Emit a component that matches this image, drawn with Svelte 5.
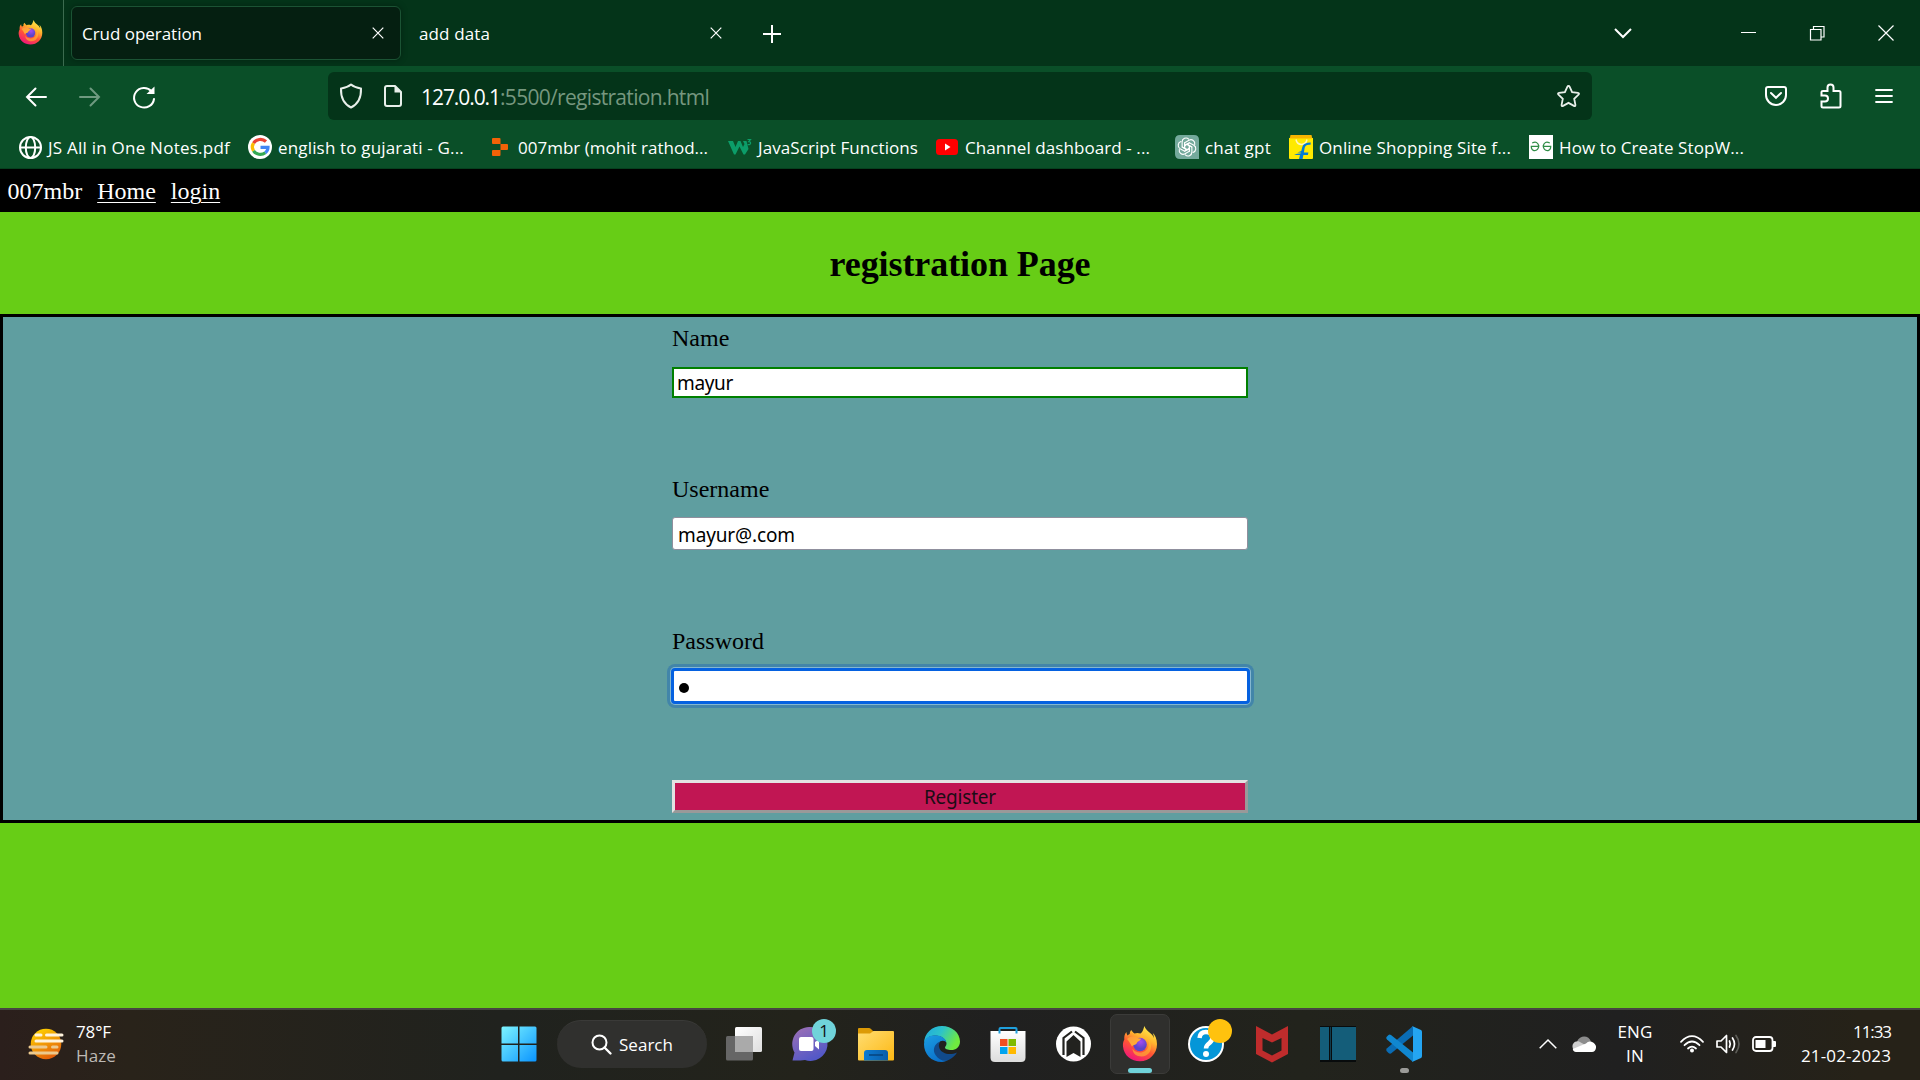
<script>
  // Spreads a label's letters so that it fills a given width.
  function fit(node, width) {
    const extra = width - node.getBoundingClientRect().width;
    node.style.letterSpacing = extra / node.textContent.length + 'px';
  }

  const bookmarks = [
    { icon: 'globe', label: 'JS All in One Notes.pdf', width: 182 },
    { icon: 'google', label: 'english to gujarati - G...', width: 186 },
    { icon: 'replit', label: '007mbr (mohit rathod...', width: 190 },
    { icon: 'w3', label: 'JavaScript Functions', width: 160 },
    { icon: 'youtube', label: 'Channel dashboard - ...', width: 185 },
    { icon: 'gpt', label: 'chat gpt', width: 66 },
    { icon: 'flipkart', label: 'Online Shopping Site f...', width: 192 },
    { icon: 'gfg', label: 'How to Create StopW...', width: 185 }
  ];
  const apps = ['taskview', 'chat', 'folder', 'edge', 'store', 'arch', 'firefox', 'help', 'mcafee', 'book', 'code'];
  const petals = [0, 60, 120, 180, 240, 300];
</script>

{#snippet firefox(id, size)}
  <svg width={size} height={size} viewBox="0 0 36 36">
    <defs>
      <linearGradient id="{id}a" x1=".8" y1="0" x2=".3" y2="1">
        <stop offset="0" stop-color="#fff44f" /><stop offset=".35" stop-color="#ffb52e" />
        <stop offset=".62" stop-color="#ff5634" /><stop offset="1" stop-color="#f0147c" />
      </linearGradient>
      <radialGradient id="{id}b" cx=".55" cy=".3"><stop offset="0" stop-color="#a44cf2" /><stop offset="1" stop-color="#5b45c9" /></radialGradient>
      <linearGradient id="{id}c" x1="0" y1="0" x2="1" y2="1"><stop offset="0" stop-color="#ff9640" /><stop offset="1" stop-color="#ffb82c" /></linearGradient>
    </defs>
    <path fill="url(#{id}a)" d="M22.500 0c-1.500 3.200-1 5.200-4 7.600-2-.8-4-.8-6-.1C11 6.600 10 5.200 9.300 4c-1.200 1.200-1.600 2.500-1.500 4.100-.8.300-1.500.8-2.100 1.500C4.800 8.600 4.500 7.200 4.500 6 2.200 8 2.200 11.200 2.300 13.500 1 15.800.8 18 1 20.500c.8 9 8.300 14.800 17 14.800 9.400 0 17-7.400 17-17 0-5.500-2-9.300-4.300-11.300.9 2 1.200 3.500 1.300 5C30.500 7 24 5.500 22.500 0z" />
    <circle cx="18" cy="18.500" r="6.800" fill="url(#{id}b)" />
    <path fill="url(#{id}c)" d="M5 13c3-2.500 7-3 9.500-2 .3 1.400 3 1.500 4.500 1.700-.4 2-3.500 2.400-4.200 4.200-.5 2-3.300 1.200-4.800 3.600C8 17 6.500 14.500 5 13z" />
    <path fill="#ffbd2e" opacity=".6" d="M23 10c4 3 4.500 7 3.500 10-1 4-4.500 6.500-8.500 6.500-3 0-6-1.500-7.500-4 0 5 4 8 9 8 7 0 10-6 9.500-11-.3-4-2.500-8-6-9.500z" />
  </svg>
{/snippet}

<div class="screen">
  <div class="tabs">
    <div class="logo">{@render firefox('t', 25)}</div>
    <div class="tab active">
      <span class="lbl"><span use:fit={120}>Crud operation</span></span>
      <svg width="12" height="12" viewBox="0 0 12 12"><path d="M.7.7l10.600 10.600M11.300.7L.7 11.300" stroke="#fff" stroke-width="1.200" /></svg>
    </div>
    <div class="tab">
      <span class="lbl"><span use:fit={71}>add data</span></span>
      <svg width="12" height="12" viewBox="0 0 12 12"><path d="M.7.7l10.600 10.600M11.300.7L.7 11.300" stroke="#fff" stroke-width="1.200" /></svg>
    </div>
    <svg class="plus" width="18" height="18" viewBox="0 0 18 18"><path d="M9 0v18M0 9h18" stroke="#fff" stroke-width="2" /></svg>
    <div class="window">
      <svg width="18" height="10" viewBox="0 0 18 10"><path d="M1 1l8 8 8-8" fill="none" stroke="#fff" stroke-width="2" /></svg>
      <svg class="min" width="15" height="16" viewBox="0 0 15 16"><path d="M0 7.500h15" stroke="#fff" /></svg>
      <svg class="max" width="15" height="15" viewBox="0 0 15 15"><path d="M.5 3.500h10.500v10.500H.5zM3.500 3.500V.5h10.500v10.500h-3" fill="none" stroke="#fff" stroke-width="1.200" /></svg>
      <svg class="cls" width="16" height="16" viewBox="0 0 16 16"><path d="M.5.5l15 15M15.500.5l-15 15" stroke="#fff" stroke-width="1.200" /></svg>
    </div>
  </div>

  <div class="toolbar">
    <svg width="22" height="20" viewBox="0 0 22 20"><path d="M10.500 1.500L2 10l8.500 8.500M2 10h19" fill="none" stroke="#fff" stroke-width="2" stroke-linecap="round" /></svg>
    <svg class="fwd" width="22" height="20" viewBox="0 0 22 20"><path d="M11.500 1.500L20 10l-8.500 8.500M20 10H1" fill="none" stroke="#6f9a80" stroke-width="2" stroke-linecap="round" /></svg>
    <svg class="reload" width="24" height="24" viewBox="0 0 24 24"><path d="M19.500 6.200A10 9.800 0 1 0 22 14" fill="none" stroke="#fff" stroke-width="2" stroke-linecap="round" /><path d="M22.500 1.500V9h-8z" fill="#fff" /></svg>
    <div class="url">
      <svg width="24" height="26" viewBox="0 0 24 26"><path d="M12 1.500c3.500 3 7 3.500 10 4 .3 8-2 15-10 19C4 20.500 1.700 13.500 2 5.500c3-.5 6.500-1 10-4z" fill="none" stroke="#e8efea" stroke-width="2" stroke-linejoin="round" /></svg>
      <svg class="page" width="20" height="24" viewBox="0 0 20 24"><path d="M12 2H4Q2 2 2 4v16q0 2 2 2h12q2 0 2-2V8z" fill="none" stroke="#e8efea" stroke-width="2" stroke-linejoin="round" /><path d="M11.500 1.500V8.500H18.500z" fill="#e8efea" /></svg>
      <span class="addr"><b use:fit={79}>127.0.0.1</b><i use:fit={209}>:5500/registration.html</i></span>
      <svg class="star" width="25" height="25" viewBox="0 0 25 25"><path d="M12.500 2q.8 0 1.200.9l2.400 5.300 5.800.7q1.900.4.6 1.800l-4.300 4.100 1.200 6q.2 1.900-1.500 1.100l-5.400-3-5.400 3q-1.700.8-1.500-1.100l1.200-6-4.300-4.100q-1.300-1.400.6-1.800l5.800-.7 2.400-5.300q.4-.9 1.200-.9z" fill="none" stroke="#e8efea" stroke-width="1.800" /></svg>
    </div>
    <div class="tools">
      <svg width="24" height="22" viewBox="0 0 24 22"><path d="M4 2h16q2 0 2 2v6a10 10 0 0 1-20 0V4q0-2 2-2z" fill="none" stroke="#fff" stroke-width="2" /><path d="M7 8l5 4.800L17 8" fill="none" stroke="#fff" stroke-width="2" stroke-linecap="round" /></svg>
      <svg width="22" height="26" viewBox="0 0 22 26"><path d="M3 24.500q-1.500 0-1.500-1.500v-4.500H5a3 3 0 0 0 0-6H1.500V9Q1.500 8 3 8h4.500V4.500a3 3 0 0 1 6 0V8H19q1.500 0 1.500 1.500V23q0 1.500-1.500 1.500z" fill="none" stroke="#fff" stroke-width="2" /></svg>
      <svg width="18" height="16" viewBox="0 0 18 16"><path d="M1 2h16M1 8h16M1 14h16" stroke="#fff" stroke-width="1.800" stroke-linecap="round" /></svg>
    </div>
  </div>

  <div class="bookmarks">
    {#each bookmarks as b}
      <div class="bm">
        <svg width="24" height="24" viewBox="0 0 24 24">
          {#if b.icon === 'globe'}
            <g fill="none" stroke="#fff" stroke-width="2"><circle cx="12.500" cy="12.500" r="10.500" /><ellipse cx="12.500" cy="12.500" rx="4.700" ry="10.500" /><path d="M2 12.500h21" /></g>
          {:else if b.icon === 'google'}
            <circle cx="12" cy="12" r="12" fill="#fff" />
            <g fill="none" stroke-width="3.200">
              <path d="M18 6.500A8 7.500 0 0 0 5.500 8.200" stroke="#ea4335" /><path d="M5.500 8.200a8 7.500 0 0 0 0 7.600" stroke="#fbbc05" />
              <path d="M5.500 15.800a8 7.500 0 0 0 11.800 2" stroke="#34a853" /><path d="M17.300 17.800A8 7.500 0 0 0 20 12.300h-7.500" stroke="#4285f4" />
            </g>
          {:else if b.icon === 'replit'}
            <path d="M5 3h6.500q1 0 1 1v5H5q-1 0-1-1V4q0-1 1-1zM12.500 9h6.500q1 0 1 1v4q0 1-1 1h-6.500zM5 15h7.500v5q0 1-1 1H5q-1 0-1-1v-4q0-1 1-1z" fill="#f26207" />
          {:else if b.icon === 'w3'}
            <path d="M0 6h5l2.500 6L10 6h2.500L15 12l1.500-3-1.500-3h3.500l2 8-3.500 5.500h-1.500l-4-8-4 8H6z" fill="#0c9d69" />
            <path d="M19.500 4.500h3l-1.800 2.200q2 0 1.900 1.500-.2 1.700-3 1.300" fill="none" stroke="#0c9d69" stroke-width="1.200" />
          {:else if b.icon === 'youtube'}
            <rect x="1" y="4" width="22" height="16" rx="3.500" fill="#f00" /><path d="M10 8.500l5.500 3.500-5.500 3.500z" fill="#fff" />
          {:else if b.icon === 'gpt'}
            <path d="M5 0h14q5 0 5 5v19H5q-5 0-5-5V5q0-5 5-5z" fill="#74aa9c" />
            {#each petals as p}
              <path d="M9.600 13.400V7.800L14 5.200a3.900 3.900 0 0 1 5.700 4.300M9.600 10.600L12 9.200l4.800 2.800" transform="rotate({p} 12 12)" fill="none" stroke="#fff" stroke-width="1.100" stroke-linecap="round" />
            {/each}
          {:else if b.icon === 'flipkart'}
            <path d="M0 3h24v20q0 1-1 1H1q-1 0-1-1z" fill="#ffea00" /><path d="M1.500 0h21l.8 3.500H.7z" fill="#f7b500" />
            <path d="M7 4.500q1 5 5.500 5T18 4.500" fill="none" stroke="#fff8b8" stroke-width="1.500" />
            <path d="M21.500 9.800q-5.500-.8-6 4l-.6 3.700h4.500l-.5 2.500h-4.500l-.8 4H10l1-4H5l3-1.200 3.500-.3.300-1H8.500l3.800-1.500 1-4q1-4.500 8.500-4.500z" fill="#047bd5" />
          {:else}
            <path d="M0 0h24v24H0z" fill="#fff" />
            <path d="M3.200 8Q8.500 5.500 9.800 11q-.6 5-5 4.500-2.500-.5-2.500-4.200h7.500M20.800 8q-5.300-2.500-6.600 3 .6 5 5 4.500 2.500-.5 2.500-4.200h-7.500" fill="none" stroke="#2f8d46" stroke-width="1.300" />
          {/if}
        </svg>
        <span class="lbl"><span use:fit={b.width}>{b.label}</span></span>
      </div>
    {/each}
  </div>

  <div class="nav"><span>007mbr</span><a href="#home">Home</a><a href="#login">login</a></div>

  <div class="content">
    <h1><span use:fit={261}>registration Page</span></h1>
    <div class="form">
      <div class="col">
        <div class="label">Name</div>
        <div class="field name"><span use:fit={56}>mayur</span></div>
        <div class="label second">Username</div>
        <div class="field user"><span use:fit={117}>mayur@.com</span></div>
        <div class="label second">Password</div>
        <div class="field pass"><span class="dot"></span></div>
        <div class="button"><span use:fit={72}>Register</span></div>
      </div>
    </div>
  </div>

  <div class="taskbar">
    <div class="weather">
      <svg width="36" height="32" viewBox="0 0 36 32">
        <defs><linearGradient id="sun" x1=".2" y1="0" x2=".7" y2="1"><stop offset="0" stop-color="#ffd500" /><stop offset="1" stop-color="#e2590b" /></linearGradient></defs>
        <circle cx="18" cy="16" r="15.300" fill="url(#sun)" />
        <g stroke-width="3" stroke-linecap="round"><path d="M8 7h5M18.500 7H34M8 13h26" stroke="#fff3dc" /><path d="M2 19h16M24.500 19h4.500M2 25h27" stroke="#ecc98e" /></g>
      </svg>
      <div class="wtext"><span class="ln"><span use:fit={35}>78°F</span></span><span class="ln dim"><span use:fit={40}>Haze</span></span></div>
    </div>
    <div class="app">
      <svg width="36" height="36" viewBox="0 0 36 36">
        <defs><linearGradient id="win" x1="0" y1="0" x2="1" y2="1"><stop offset="0" stop-color="#7df5ff" /><stop offset="1" stop-color="#0a94ff" /></linearGradient></defs>
        <path d="M2 .5h15v17H.5V2Q.5.500 2 .5zM18.500.5H34q1.500 0 1.500 1.500v15.500h-17zM.5 19H17v16.500H2Q.5 35.500.5 34zM18.500 19h17v15q0 1.500-1.500 1.500H18.500z" fill="url(#win)" />
      </svg>
    </div>
    <div class="search">
      <svg width="21" height="21" viewBox="0 0 21 21"><circle cx="8.500" cy="8.500" r="7" fill="none" stroke="#fff" stroke-width="2" /><path d="M13.500 13.500l6 6" stroke="#fff" stroke-width="2.400" stroke-linecap="round" /></svg>
      <span use:fit={54}>Search</span>
    </div>
    {#each apps as a}
      <div class="app" class:current={a === 'firefox'}>
        {#if a === 'firefox'}
          {@render firefox('b', 36)}
          <span class="bar"></span>
        {:else}
          <svg width="36" height="36" viewBox="0 0 36 36">
            {#if a === 'taskview'}
              <defs><linearGradient id="tv" x1="0" y1="0" x2="1" y2="1"><stop offset="0" stop-color="#fff" /><stop offset="1" stop-color="#dedede" /></linearGradient></defs>
              <rect y="10" width="27" height="24.500" rx="1.500" fill="#666" /><rect x="9" y="1" width="27" height="25" rx="1.500" fill="url(#tv)" /><path d="M9 10h18v16H9z" fill="#aaa" />
            {:else if a === 'chat'}
              <defs><linearGradient id="ct" x1="0" y1="0" x2=".5" y2="1"><stop offset="0" stop-color="#a071b4" /><stop offset="1" stop-color="#5358c7" /></linearGradient></defs>
              <path d="M17 1a17 17 0 1 1-4 33q-6 .8-12.500.5l2-8A17 17 0 0 1 17 1z" fill="url(#ct)" />
              <rect x="7" y="11" width="14.500" height="14" rx="2" fill="#fff" /><path d="M23 16l4-2.500v10L23 20z" fill="#fff" />
            {:else if a === 'folder'}
              <defs><linearGradient id="fd" x1="0" y1="0" x2="1" y2="1"><stop offset="0" stop-color="#ffdd72" /><stop offset="1" stop-color="#fdb813" /></linearGradient>
                <linearGradient id="fb" x1="0" y1="0" x2="1" y2="0"><stop offset="0" stop-color="#0d7bd2" /><stop offset="1" stop-color="#0b5da8" /></linearGradient></defs>
              <path d="M0 12V3q0-1 1-1h10q1 0 2 1l3 3-3 6z" fill="#dc9a06" /><path d="M0 7.500h12l3.500-2.500H35q1 0 1 1v27.500q0 1-1 1H1q-1 0-1-1z" fill="url(#fd)" />
              <path d="M6 34.500V27q0-3 3-3h18q3 0 3 3v7.500z" fill="url(#fb)" /><path d="M11 29h14" stroke="#074680" stroke-width="1.600" />
            {:else if a === 'edge'}
              <defs><linearGradient id="ea" x1="0" y1="0" x2="1" y2=".4"><stop offset="0" stop-color="#1fa8e0" /><stop offset=".5" stop-color="#2dc3c9" /><stop offset="1" stop-color="#6fea3f" /></linearGradient>
                <linearGradient id="eb" x1="0" y1="0" x2=".6" y2="1"><stop offset="0" stop-color="#1b9ee3" /><stop offset="1" stop-color="#0a6fc9" /></linearGradient></defs>
              <path d="M0 18C0 7 8 0 18 0s18 7 18 15.500c0 6-4.500 8.500-8.500 8.500-4 0-6.500-1-6.500-2.500 0-1 1.500-1.500 1.500-4C22.500 14 18 9.500 11 9.500 5 9.500 1 13 0 18z" fill="url(#ea)" />
              <path d="M0 18C.5 12 5.500 9.300 11 9.300c6 0 10.500 3 11.300 6.700C17 12.500 13 17 13.500 22c.5 6 6 10.500 12 10.500C23 35 20 36 18 36 7 36 0 28 0 18z" fill="url(#eb)" />
              <path d="M14 16.500c-4 3-5.500 8-2.500 12.500 3.500 5.500 10 7.300 14 4.500 3.500-1.800 6-4.500 7.500-7-7 3-15 1.500-17.500-4-1-2.500-.8-4.500.5-6.500z" fill="#114a8b" />
            {:else if a === 'store'}
              <defs><linearGradient id="st" x1="0" y1="0" x2="0" y2="1"><stop offset="0" stop-color="#fff" /><stop offset="1" stop-color="#dcdcdc" /></linearGradient></defs>
              <path d="M.5 5h35v26.500q0 4.500-4.500 4.500H5Q.5 36 .5 31.500z" fill="url(#st)" /><path d="M9.500 7.500V3q0-1 1-1h15q1 0 1 1v4.500" fill="none" stroke="#1fa0dd" stroke-width="2" />
              <path d="M10 13h7.500v7H10z" fill="#f25022" /><path d="M18.500 13H26v7h-7.500z" fill="#7fba00" /><path d="M10 21h7.500v7H10z" fill="#00a4ef" /><path d="M18.500 21H26v7h-7.500z" fill="#ffb900" />
            {:else if a === 'arch'}
              <circle cx="17.500" cy="18" r="17.500" fill="#fff" />
              <g fill="#22221f"><path d="M10.500 31V15.500l7-6.500 7 6.500V31l-7-4z" /></g>
              <path d="M16 5.500L7.500 12v17M19 5.500l8.500 6.500v17" fill="none" stroke="#22221f" stroke-width="2.200" />
            {:else if a === 'help'}
              <circle cx="18" cy="18" r="18" fill="#fff" /><circle cx="18" cy="18" r="16" fill="#0496d8" />
              <path d="M11.500 12q.5-6 6.500-6t6.500 5.500q0 3-3 5.500-3.500 2.500-3.500 5.500" fill="none" stroke="#fff" stroke-width="4.500" /><circle cx="18" cy="28" r="3" fill="#fff" />
            {:else if a === 'mcafee'}
              <path d="M2 0l16 8.500L34 0v28l-16 8.500L2 28zM8.500 12v12.500L18 29.500l9.500-5V12L18 16.500z" fill="#bf2c2c" fill-rule="evenodd" />
            {:else if a === 'book'}
              <path d="M0 0h36v36H0z" fill="#080b0c" /><path d="M0 1h9v33H0zM12 1h24v33H12z" fill="#145d79" /><path d="M10.500 1v33" stroke="#145d79" stroke-width=".6" />
            {:else}
              <path d="M27 0v9.500L5 27.500q-1.500.5-2.500-.5L.5 25q-.8-1.500.5-2.700z" fill="#0a6cb4" />
              <path d="M27 36v-9.500L5 9q-1.500-.8-2.500 0L.5 11q-.8 1.200.5 2.500z" fill="#1087d0" /><path d="M26 0l9 4q1 .5 1 2v24q0 1.500-1 2l-9 4q1-.8 1-2V2q0-1.500-1-2z" fill="#24a5f2" />
            {/if}
          </svg>
          {#if a === 'chat'}<span class="badge teal">1</span>{/if}
          {#if a === 'help'}<span class="badge"></span>{/if}
          {#if a === 'code'}<span class="bar small"></span>{/if}
        {/if}
      </div>
    {/each}
    <div class="tray">
      <svg class="chev" width="18" height="10" viewBox="0 0 18 10"><path d="M.7 9.300L9 1l8.300 8.300" fill="none" stroke="#fff" stroke-width="1.500" /></svg>
      <svg class="cloud" width="24" height="16" viewBox="0 0 24 16"><path d="M5 5.500C8-1.500 17-1 19 5.500L12 12z" fill="#8c8c8c" /><path d="M1 13C-1 8 3 4.500 7 5.500l9 5L6 16z" fill="#cfcfcf" /><path d="M4 16Q1 15.500.8 13L14 7.500q3-3.500 7.500-.8Q24.500 9 24 12q-.8 4-4 4z" fill="#fff" /></svg>
      <div class="lang"><span class="ln"><span use:fit={35}>ENG</span></span><span class="ln"><span use:fit={18}>IN</span></span></div>
      <svg width="24" height="18" viewBox="0 0 24 18"><g fill="none" stroke="#fff" stroke-width="1.800" stroke-linecap="round"><path d="M1 6.800Q12-4.500 23 6.800M4.500 10.200q7.500-7.300 15 0M8 13.500q4-3.800 8 0" /></g><circle cx="12" cy="15.500" r="2" fill="#fff" /></svg>
      <svg width="24" height="20" viewBox="0 0 24 20"><g fill="none" stroke="#fff" stroke-width="1.700" stroke-linecap="round" stroke-linejoin="round"><path d="M1 7h4l5.500-5.500v17L5 13H1zM13.500 7q1.500 3 0 6M16.500 4q4 6 0 12" /><path d="M20 1.500q6 8.500 0 17" stroke="#5d5d58" /></g></svg>
      <svg width="24" height="16" viewBox="0 0 24 16"><rect x="1" y="1" width="19.500" height="14" rx="3" fill="none" stroke="#fff" stroke-width="1.800" /><path d="M3.500 4h10v8h-10z" fill="#fff" /><path d="M21 5h2q1 0 1 1v4q0 1-1 1h-2z" fill="#fff" /></svg>
      <div class="clock"><span class="ln"><span use:fit={38}>11:33</span></span><span class="ln"><span use:fit={90}>21-02-2023</span></span></div>
    </div>
  </div>
</div>

<style>
  :global(body) { margin: 0; overflow: hidden; }
  .screen { width: 1920px; height: 1080px; display: flex; flex-direction: column; background: #67cd16; font-family: "Open Sans", "Noto Sans", sans-serif; font-size: 17px; color: #fff; overflow: hidden; }
  .screen * { box-sizing: border-box; }
  svg { display: block; flex: none; overflow: visible; }
  span { white-space: pre; }
  .tabs { height: 66px; flex: none; background: #043419; display: flex; align-items: center; }
  .logo { width: 64px; height: 66px; padding: 20px 0 0 18px; border-right: 1px solid #3c6b4f; }
  .tab { display: flex; align-items: center; justify-content: space-between; height: 54px; width: 330px; padding: 0 16px 0 10px; margin-left: 7px; border: 1px solid transparent; border-radius: 6px; }
  .tab + .tab { margin-left: 7px; padding-right: 15px; }
  .active { background: #051f11; border-color: #1b5334; box-shadow: 0 0 6px rgba(0, 0, 0, .35); }
  .lbl { line-height: 24px; padding-top: 1px; }
  .plus { margin: 1px 0 0 25px; }
  .window { margin-left: auto; display: flex; align-items: center; margin-right: 26px; }
  .min { margin-left: 109px; }
  .max { margin-left: 54px; }
  .cls { margin-left: 53px; }
  .toolbar { height: 60px; flex: none; background: #0a4f28; display: flex; align-items: center; padding-left: 25px; }
  .toolbar > svg { margin-top: 2px; }
  .toolbar .fwd { margin-left: 32px; }
  .toolbar .reload { margin-left: 31px; }
  .url { width: 1264px; height: 48px; margin-left: 172px; background: #043419; border-radius: 6px; display: flex; align-items: center; padding: 0 11px; }
  .page { margin-left: 20px; }
  .addr { margin-left: 18px; font-size: 21px; line-height: 30px; margin-top: 2px; display: flex; }
  .addr b { font-weight: 400; }
  .addr i { font-style: normal; color: #76977f; }
  .star { margin-left: auto; }
  .tools { display: flex; align-items: center; margin-left: 172px; gap: 32px; }
  .tools svg:last-child { margin-left: 1px; }
  .bookmarks { height: 43px; flex: none; background: #0a4f28; border-bottom: 1px solid #06401e; display: grid; grid-template-columns: 230px 240px 240px 207px 240px 114px 240px 240px; padding-left: 18px; align-items: center; }
  .bm { display: flex; gap: 6px; align-items: center; }
  .nav { height: 43px; flex: none; background: #000; display: flex; align-items: center; gap: 15px; padding: 2px 0 0 7.500px; font: 24px "Liberation Serif", serif; }
  .nav a { color: #fff; text-decoration-thickness: 1px; text-underline-offset: 3px; }
  .content { height: 796px; flex: none; color: #000; font-family: "Liberation Serif", serif; }
  h1 { margin: 0; height: 102px; line-height: 104px; font-size: 36px; text-align: center; font-weight: 700; }
  .form { height: 509px; border: 3px solid #000; background: #5f9ea0; }
  .col { width: 576px; margin: 0 auto; padding-top: 7px; }
  .label { font-size: 24px; line-height: 28px; margin-bottom: 15px; }
  .second { margin-top: 77px; margin-bottom: 14px; }
  .field { background: #fff; display: flex; align-items: center; font: 19px "Noto Sans", sans-serif; }
  .name { height: 31px; border: 2px solid green; padding-left: 3px; }
  .user { height: 33px; border: 1px solid #8f8f9d; border-radius: 3px; padding: 2px 0 0 5px; }
  .pass { height: 36px; margin: -1px -2px 0 -1px; border: 3px solid #0561e0; border-radius: 4px; padding: 4px 0 0 5px; box-shadow: 0 0 0 1px #84b7cf, 0 0 0 4px #4285a9; }
  .dot { width: 10px; height: 10px; border-radius: 50%; background: #000; }
  .button { height: 33px; margin-top: 76px; border: 3px solid; border-color: #e3e3e3 #999 #999 #e3e3e3; background: #c11653; display: flex; align-items: center; justify-content: center; font: 19px "Noto Sans", sans-serif; color: #1a0d15; }
  .taskbar { height: 72px; flex: none; border-top: 2px solid #474542; padding-bottom: 2px; background: linear-gradient(90deg, #2b1f1c 0, #29231a 130px, #20221e 500px, #23231b 800px, #202020 1000px, #22231c 1300px, #202020 1620px, #262218 1860px); display: flex; align-items: center; }
  .weather { width: 486px; padding-left: 28px; display: flex; gap: 12px; align-items: center; }
  .ln { display: block; line-height: 24px; }
  .dim { color: #bdb9b5; }
  .wtext { font-size: 17px; }
  .app { position: relative; width: 66px; height: 60px; display: flex; align-items: center; justify-content: center; }
  .current::before { content: ""; position: absolute; inset: 0 3px; border: 1px solid #3b3b39; border-radius: 7px; background: #2f2f2d; }
  .current :global(svg) { position: relative; }
  .search { width: 150px; height: 48px; margin: 0 4px 0 5px; border-radius: 24px; background: #30302e; border-top: 1px solid #3a3a38; display: flex; align-items: center; padding-left: 34px; gap: 7px; }
  .badge { position: absolute; left: 35px; top: 5px; width: 24px; height: 24px; border-radius: 50%; background: #ffc20e; color: #111; font-size: 17px; line-height: 24px; text-align: center; }
  .teal { background: #70d3da; }
  .bar { position: absolute; bottom: 1px; left: 21px; width: 24px; height: 5px; border-radius: 3px; background: #70d3da; }
  .small { width: 9px; left: 29px; background: #9b9b98; }
  .tray { margin-left: auto; margin-right: 29px; display: flex; align-items: center; gap: 12px; }
  .cloud { margin-left: 3px; }
  .lang { width: 78px; text-align: center; margin: 0 -6px 0 -12px; }
  .clock { width: 103px; text-align: right; }
</style>
